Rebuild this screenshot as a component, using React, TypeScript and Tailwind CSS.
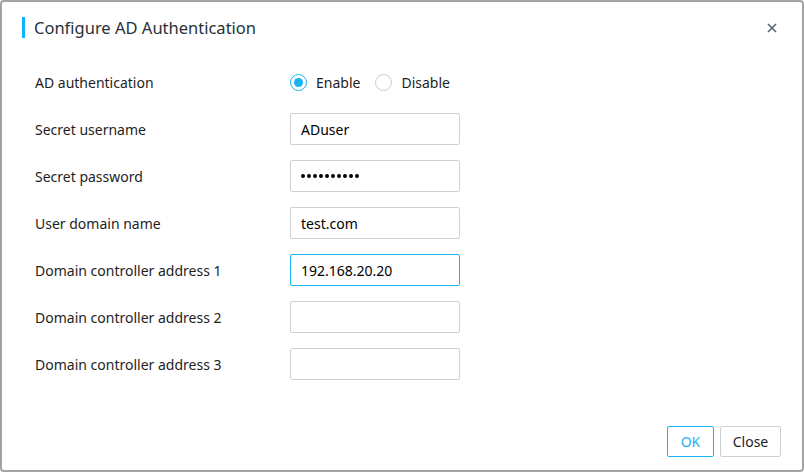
import React from 'react';

const rows = [
  { label: 'Secret username', value: 'ADuser' },
  { label: 'Secret password', value: '', password: true },
  { label: 'User domain name', value: 'test.com' },
  { label: 'Domain controller address 1', value: '192.168.20.20', focused: true },
  { label: 'Domain controller address 2', value: '' },
  { label: 'Domain controller address 3', value: '' },
];

const Radio: React.FC<{ checked?: boolean; label: string }> = ({ checked, label }) => (
  <label className="flex items-center gap-[9px]">
    <span
      className={
        checked
          ? 'flex h-[17px] w-[17px] items-center justify-center rounded-full border border-[#1ab2f5]'
          : 'flex h-[17px] w-[17px] items-center justify-center rounded-full border border-[#c9c9d1]'
      }
    >
      {checked && <span className="h-[9px] w-[9px] rounded-full bg-[#1ab2f5]" />}
    </span>
    <span>{label}</span>
  </label>
);

const App: React.FC = () => {
  return (
    <div
      className="flex h-[472px] w-[804px] flex-col rounded-[4px] border-2 border-[#a3a3a3] bg-white text-[14px] text-[#1e1e1e]"
      style={{ fontFamily: '"Noto Sans", "Liberation Sans", sans-serif' }}
    >
      <div className="flex items-center justify-between pl-[20px] pr-[25px] pt-[15px]">
        <div className="flex items-center gap-[9px]">
          <span className="h-[21px] w-[3px] bg-[#0ab4ff]" />
          <h1 className="text-[16.5px] leading-[21px] text-[#263238]">Configure AD Authentication</h1>
        </div>
        <button>
          <svg width="10" height="10" viewBox="0 0 10 10">
            <path d="M1 1L9 9M9 1L1 9" stroke="#5a6670" strokeWidth="1.6" />
          </svg>
        </button>
      </div>

      <div className="mt-[28px] flex flex-col gap-[15px] pl-[33px]">
        <div className="flex h-[32px] items-center">
          <span className="w-[255px]">AD authentication</span>
          <div className="flex items-center gap-[15px]">
            <Radio checked label="Enable" />
            <Radio label="Disable" />
          </div>
        </div>
        {rows.map((r) => (
          <div key={r.label} className="flex h-[32px] items-center">
            <span className="w-[255px]">{r.label}</span>
            <div
              className={
                r.focused
                  ? 'flex h-[32px] w-[170px] items-center rounded-[2px] border border-[#1ab2f5] px-[10px]'
                  : 'flex h-[32px] w-[170px] items-center rounded-[2px] border border-[#cfcfd6] px-[10px]'
              }
            >
              {r.password ? (
                <span className="flex gap-[2px]">
                  {Array.from({ length: 10 }).map((_, i) => (
                    <span key={i} className="h-[4px] w-[4px] rounded-full bg-black" />
                  ))}
                </span>
              ) : (
                <span className="text-black">{r.value}</span>
              )}
            </div>
          </div>
        ))}
      </div>

      <div className="mt-auto flex justify-end gap-[6px] pb-[13px] pr-[21px]">
        <button className="h-[31px] w-[47px] rounded-[2px] border border-[#1ab2f5] text-[#1ab2f5]">OK</button>
        <button className="h-[31px] w-[61px] rounded-[2px] border border-[#cfcfcf] text-[#1e1e1e]">Close</button>
      </div>
    </div>
  );
};

export default App;
